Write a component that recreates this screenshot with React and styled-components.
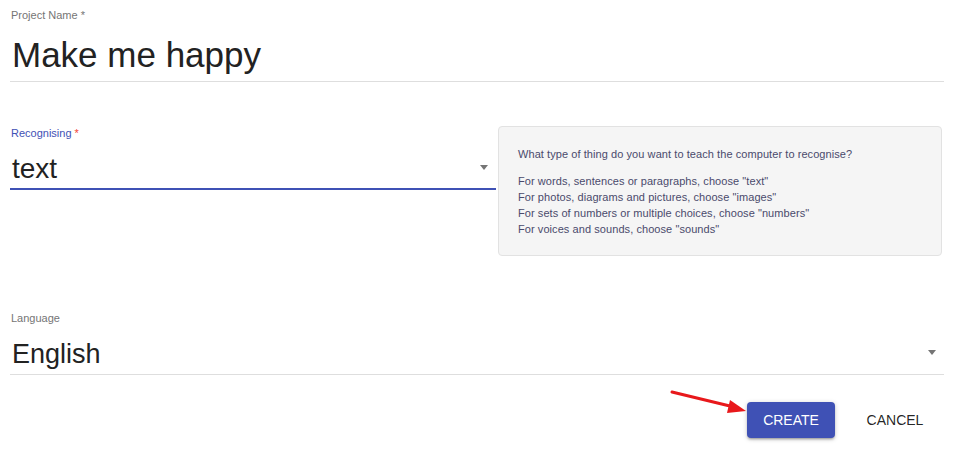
import React from "react";
import styled, { createGlobalStyle } from "styled-components";

const Global = createGlobalStyle`
  html, body { margin: 0; padding: 0; background: #fff; }
  body { font-family: "Liberation Sans", Arial, sans-serif; color: rgba(0,0,0,0.87); }
  * { box-sizing: border-box; }
`;

const Page = styled.div`
  position: relative;
  width: 963px;
  height: 451px;
  padding: 8px 19px 0 10px;
  overflow: hidden;
`;

const Field = styled.div`
  display: flex;
  flex-direction: column;
  margin-top: ${(p) => p.$top || 0}px;
  flex: ${(p) => (p.$width ? `0 0 ${p.$width}px` : "1 1 auto")};
`;

const Label = styled.label`
  font-size: 11px;
  line-height: 14px;
  height: 14px;
  padding-left: 1px;
  color: ${(p) => (p.$focused ? "#3f51b5" : "#757575")};
`;

const Star = styled.span`
  color: ${(p) => (p.$focused ? "#f44336" : "inherit")};
  margin-left: 3px;
`;

const Value = styled.div`
  display: flex;
  align-items: center;
  justify-content: space-between;
  margin-top: ${(p) => p.$gap}px;
  padding: 0 8px 0 2px;
  font-size: ${(p) => p.$size}px;
  line-height: ${(p) => p.$lh}px;
  padding-bottom: ${(p) => p.$pb}px;
  color: #222;
  border-bottom: ${(p) => (p.$focused ? "2px solid #3f51b5" : "1px solid #dedede")};
`;

const Caret = styled.span`
  width: 0;
  height: 0;
  border-left: 4px solid transparent;
  border-right: 4px solid transparent;
  border-top: 5px solid #757575;
  margin-top: ${(p) => p.$offset || 0}px;
`;

const Row = styled.div`
  display: flex;
  align-items: flex-start;
  margin-top: 44px;
`;

const Help = styled.div`
  flex: 1 1 auto;
  margin: 0 2px 0 2px;
  height: 130px;
  background: #f5f5f5;
  border: 1px solid #e2e2e2;
  border-radius: 4px;
  padding: 19px 19px;
  font-size: 11px;
  letter-spacing: 0.07px;
  line-height: 16px;
  color: #4a4a6c;
`;

const HelpLine = styled.div`
  margin-top: ${(p) => (p.$spaced ? 11 : 0)}px;
`;

const Actions = styled.div`
  display: flex;
  justify-content: flex-end;
  gap: 16px;
  margin-top: 27px;
  padding-right: 5px;
`;

const Button = styled.button`
  width: 88px;
  height: 36px;
  border: none;
  border-radius: 4px;
  font-family: "Liberation Sans", Arial, sans-serif;
  font-size: 14px;
  text-transform: uppercase;
  cursor: pointer;
  background: ${(p) => (p.$primary ? "#3f51b5" : "transparent")};
  color: ${(p) => (p.$primary ? "#fff" : "rgba(0,0,0,0.87)")};
  box-shadow: ${(p) =>
    p.$primary
      ? "0 1px 5px 0 rgba(0,0,0,0.2), 0 2px 2px 0 rgba(0,0,0,0.14), 0 3px 1px -2px rgba(0,0,0,0.12)"
      : "none"};
`;

const Arrow = styled.svg`
  position: absolute;
  left: 668px;
  top: 386px;
  pointer-events: none;
`;

export default function App() {
  return (
    <Page>
      <Global />
      <Field>
        <Label>
          Project Name<Star>*</Star>
        </Label>
        <Value $gap={12} $size={35} $lh={42} $pb={5}>
          Make me happy
        </Value>
      </Field>

      <Row>
        <Field $width={486}>
          <Label $focused>
            Recognising<Star $focused>*</Star>
          </Label>
          <Value $focused $gap={12} $size={28} $lh={33} $pb={3}>
            text
            <Caret $offset={-2} />
          </Value>
        </Field>
        <Help>
          <HelpLine>What type of thing do you want to teach the computer to recognise?</HelpLine>
          <HelpLine $spaced>For words, sentences or paragraphs, choose "text"</HelpLine>
          <HelpLine>For photos, diagrams and pictures, choose "images"</HelpLine>
          <HelpLine>For sets of numbers or multiple choices, choose "numbers"</HelpLine>
          <HelpLine>For voices and sounds, choose "sounds"</HelpLine>
        </Help>
      </Row>

      <Field $top={55}>
        <Label>Language</Label>
        <Value $gap={13} $size={27} $lh={32} $pb={4}>
          English
          <Caret $offset={-4} />
        </Value>
      </Field>

      <Actions>
        <Button $primary>Create</Button>
        <Button>Cancel</Button>
      </Actions>

      <Arrow width="82" height="32" viewBox="0 0 82 32">
        <line x1="4" y1="6" x2="66" y2="21" stroke="#e8181b" strokeWidth="3" strokeLinecap="round" />
        <polygon points="78,25 62,14 59,27" fill="#e8181b" />
      </Arrow>
    </Page>
  );
}
